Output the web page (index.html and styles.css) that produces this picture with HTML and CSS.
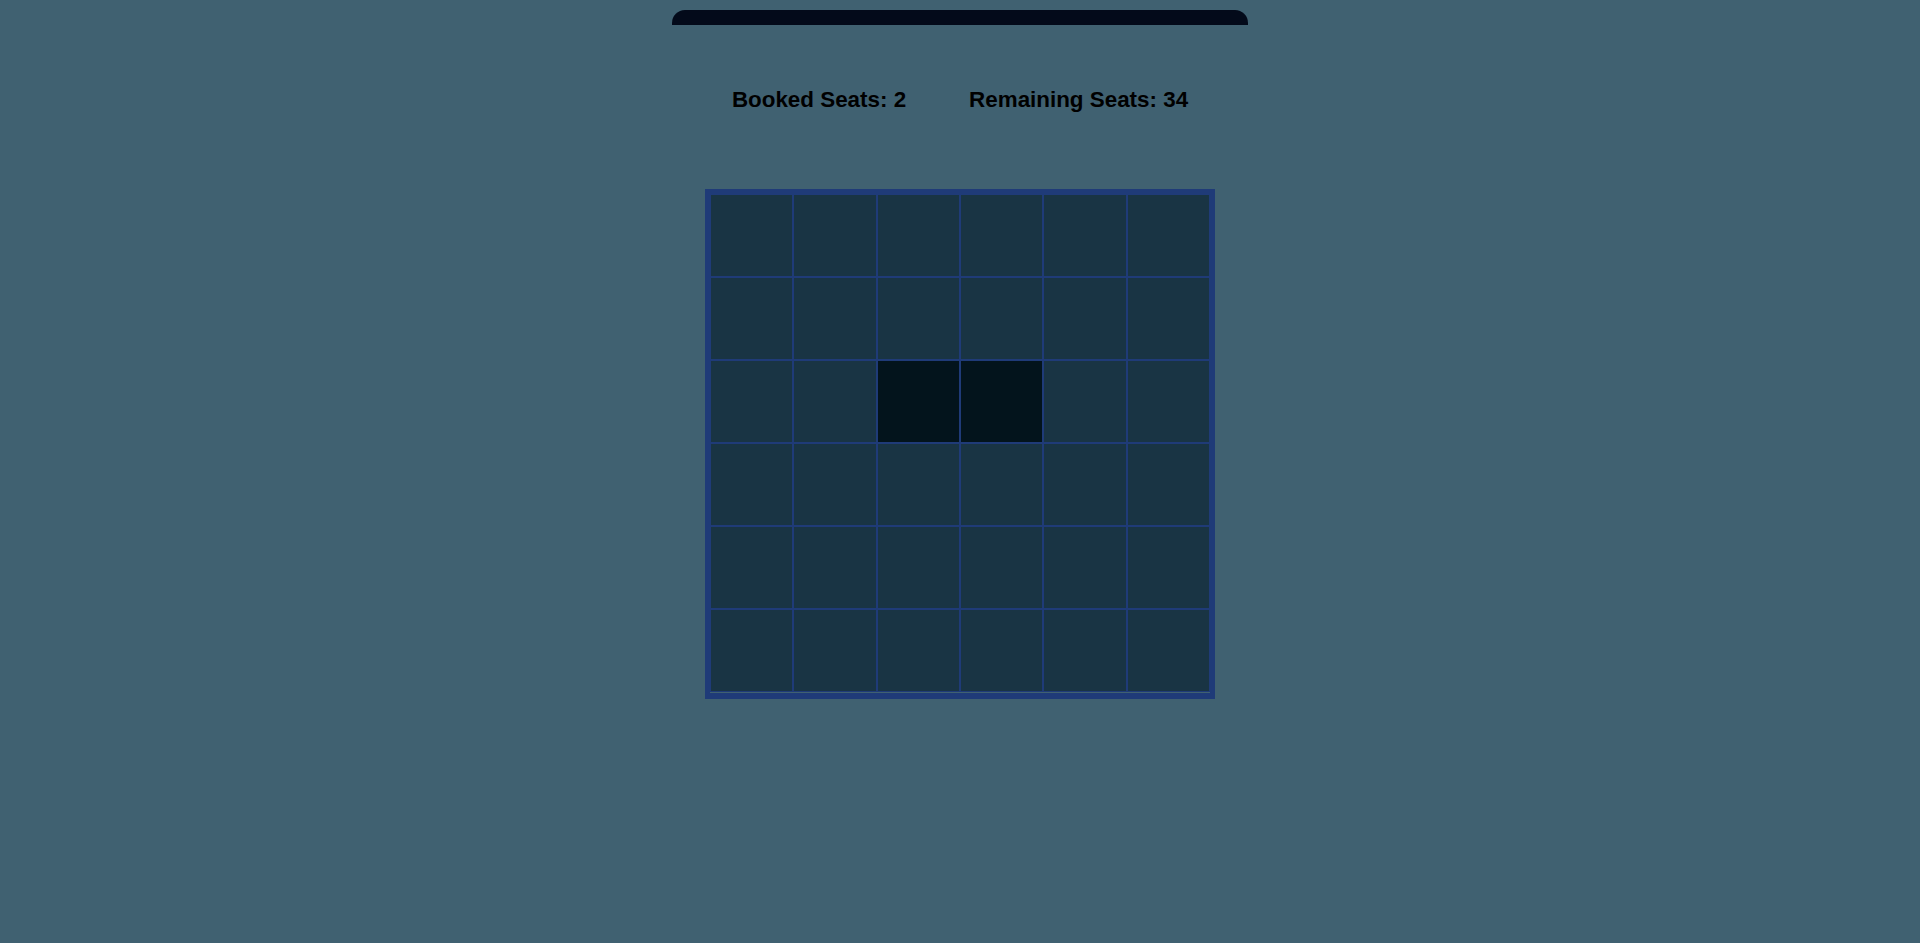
FILE: index.html
```html
<!DOCTYPE html>
<html lang="en">
<head>
<meta charset="utf-8">
<title>Seat Booking</title>
<link rel="stylesheet" href="styles.css">
</head>
<body>
<div class="screen"></div>
<div class="stats">
  <span class="stat">Booked Seats: 2</span>
  <span class="stat">Remaining Seats: 34</span>
</div>
<div class="hall">
  <div class="seat"></div><div class="seat"></div><div class="seat"></div><div class="seat"></div><div class="seat"></div><div class="seat"></div>
  <div class="seat"></div><div class="seat"></div><div class="seat"></div><div class="seat"></div><div class="seat"></div><div class="seat"></div>
  <div class="seat"></div><div class="seat"></div><div class="seat booked"></div><div class="seat booked"></div><div class="seat"></div><div class="seat"></div>
  <div class="seat"></div><div class="seat"></div><div class="seat"></div><div class="seat"></div><div class="seat"></div><div class="seat"></div>
  <div class="seat"></div><div class="seat"></div><div class="seat"></div><div class="seat"></div><div class="seat"></div><div class="seat"></div>
  <div class="seat"></div><div class="seat"></div><div class="seat"></div><div class="seat"></div><div class="seat"></div><div class="seat"></div>
</div>
</body>
</html>
```
FILE: styles.css
```css
html, body {
  margin: 0;
  padding: 0;
}
body {
  background: #406171;
  font-family: "Liberation Sans", Arial, sans-serif;
  min-height: 943px;
}
.screen {
  width: 576px;
  height: 15px;
  margin: 10px auto 0;
  background: #030a1a;
  border-radius: 13px 13px 0 0;
}
.stats {
  display: flex;
  justify-content: center;
  gap: 63px;
  margin-top: 62px;
  font-size: 22.4px;
  font-weight: bold;
  color: #000;
}
.hall {
  width: 500px;
  height: 499px;
  margin: 76px auto 0;
  border: 5px solid #1f3b78;
  border-bottom-width: 6px;
  display: grid;
  grid-template-columns: repeat(6, 1fr);
  grid-template-rows: repeat(6, 83px);
  align-content: start;
}
.seat {
  background: #193444;
  border: 1px solid #1f3b78;
}
.seat.booked {
  background: #03141c;
}
```
